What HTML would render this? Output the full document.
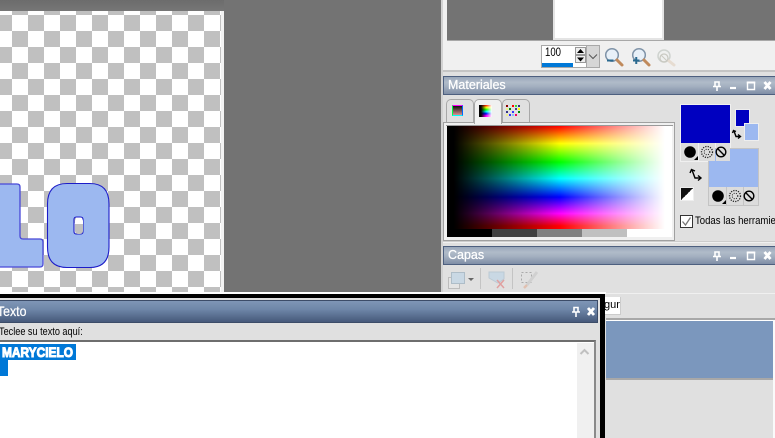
<!DOCTYPE html>
<html><head><meta charset="utf-8"><style>
html,body{margin:0;padding:0;width:775px;height:438px;overflow:hidden;background:#e0e0e0;font-family:"Liberation Sans",sans-serif}
div,svg,span{position:absolute;box-sizing:border-box}
.tb{left:443px;width:332px;height:19px;background:linear-gradient(#98a6b9,#b0bbc9 30%,#a4b0c0 55%,#7f8ea6);border:1px solid #4d5f7f;border-right:0;color:#fff;font-size:12.5px;line-height:17px;padding-left:4px;-webkit-text-stroke:.25px #fff}
</style></head><body>
<!-- canvas area -->
<div style="left:0;top:0;width:441px;height:292px;background:#737373"></div>
<div style="left:0;top:0;width:224px;height:11px;background:linear-gradient(#6c6c6c,#767676)"></div>
<div style="left:0;top:11px;width:221px;height:281px;background-color:#fff;background-image:conic-gradient(#c0c0c0 25%,#fff 0 50%,#c0c0c0 0 75%,#fff 0);background-size:32px 32px;background-position:12px 4px"></div>
<div style="left:221px;top:11px;width:3px;height:281px;background:#f2f2f2"></div>
<svg style="left:0;top:170px" width="224" height="122" viewBox="0 170 224 122">
<path d="M-5 184H17Q20 184 20 187V236Q20 239 23 239H40Q43 239 43 242V264Q43 267 40 267H-5Z" fill="#9cb8f0" stroke="#4848d8" stroke-width="1.3"/>
<path fill-rule="evenodd" d="M67 183.500H90Q109 183.500 109 204V247Q109 267.500 90 267.500H67Q47.500 267.500 47.500 247V204Q47.500 183.500 67 183.500ZM76.500 217Q74 217 74 219.500V231.500Q74 234 76.500 234H80.500Q83 234 83 231.500V219.500Q83 217 80.500 217Z" fill="#9cb8f0" stroke="#1c1cc8" stroke-width="1.1"/>
</svg>
<div style="left:74.500px;top:217.500px;width:8px;height:16px;border-radius:3px;background:linear-gradient(#fff 0 6px,#c0c0c0 6px)"></div>

<!-- right side -->
<div style="left:441px;top:0;width:334px;height:438px;background:#e0e0e0;border-left:2px solid #d2d2d2"></div>
<div style="left:443px;top:0;width:332px;height:72px;background:#f0f0f0;border-bottom:2px solid #c4c4c4"></div>
<div style="left:447px;top:0;width:328px;height:41px;background:#737373;border-bottom:1px solid #a8a8a8"></div>
<div style="left:553px;top:0;width:111px;height:40px;background:#fff;border:2px solid #e4e4e4;border-top:0"></div>
<!-- spinbox -->
<div style="left:541px;top:45px;width:46px;height:23px;background:#fff;border:1px solid #a8a8a8"></div>
<div style="left:545px;top:45px;font-size:12px;line-height:14px;color:#000;transform:scaleX(.8);transform-origin:0 0">100</div>
<div style="left:542px;top:63px;width:31px;height:4px;background:#0078d7"></div>
<div style="left:575px;top:47px;width:11px;height:8px;background:#eee;border:1px solid #999"></div>
<div style="left:575px;top:55px;width:11px;height:8px;background:#eee;border:1px solid #999"></div>
<svg style="left:575px;top:47px" width="12" height="17"><path d="M2 6 5.500 2 9 6Z M2 10.500 5.500 14.500 9 10.500Z" fill="#000"/></svg>
<div style="left:586px;top:45px;width:14px;height:23px;background:#d6d6d6;border:1px solid #a8a8a8"></div>
<svg style="left:586px;top:45px" width="14" height="23"><path d="M3 9.500 7 13.500 11 9.500" fill="none" stroke="#555" stroke-width="1"/></svg>
<!-- zoom icons -->
<svg style="left:604px;top:46px" width="74" height="22">
<g fill="none"><circle cx="8" cy="9" r="6.300" fill="#e8f0f8" stroke="#7f93a8" stroke-width="1.500"/><path d="M13 14 18 19" stroke="#c08a5c" stroke-width="3" stroke-linecap="round"/><path d="M3 14.500H9.500" stroke="#2a6a90" stroke-width="2"/></g>
<g fill="none" transform="translate(27)"><circle cx="8" cy="9" r="6.300" fill="#e8f0f8" stroke="#7f93a8" stroke-width="1.500"/><path d="M13 14 18 19" stroke="#c08a5c" stroke-width="3" stroke-linecap="round"/><path d="M2 14.500H8.500M5.250 11V18" stroke="#2a6a90" stroke-width="2"/></g>
<g fill="none" transform="translate(52)" opacity=".45"><circle cx="8" cy="10" r="6" fill="#eef2ee" stroke="#a8b0a8" stroke-width="1.500"/><path d="M13 15 18 19" stroke="#dcc4ac" stroke-width="3" stroke-linecap="round"/><circle cx="8" cy="12" r="4" stroke="#9a9a8a" stroke-width="1.200"/><path d="M5.500 9.500 10.500 14.500" stroke="#9a9a8a"/></g>
</svg>

<!-- Materiales -->
<div class="tb" style="top:76px">Materiales</div>
<svg style="left:708px;top:78px" width="67" height="16" fill="none" stroke="#fff">
<path d="M7 4H11V8.500H7ZM5 8.500H13M9 9V13" stroke-width="1.600"/>
<path d="M22 10H28" stroke-width="2.200"/>
<path d="M39.500 4.500H46.500V11.500H39.500Z" stroke-width="1.400"/><path d="M38.800 4.500H47.200" stroke-width="2"/>
<path d="M56.500 4 62.500 11M62.500 4 56.500 11" stroke-width="2.800"/>
</svg>
<!-- tabs -->
<div style="left:446px;top:99px;width:28px;height:24px;background:#e0e0e0;border:1px solid #a8a8a8;border-bottom:0;border-radius:5px 5px 0 0"></div>
<div style="left:502px;top:99px;width:28px;height:24px;background:#e0e0e0;border:1px solid #a8a8a8;border-bottom:0;border-radius:5px 5px 0 0"></div>
<div style="left:443px;top:122px;width:232px;height:119px;background:#f0f0f0;border:1px solid #a0a0a0"></div>
<div style="left:474px;top:99px;width:28px;height:25px;background:#f0f0f0;border:1px solid #a8a8a8;border-bottom:0;border-radius:5px 5px 0 0"></div>
<div style="left:452px;top:105px;width:11px;height:11px;background:linear-gradient(#111,#d89090);border:1px solid;border-color:#f0f #06f #0ff #0f4"></div>
<div style="left:479px;top:105px;width:13px;height:12px;background:linear-gradient(90deg,#000 15%,transparent 55%,#fff),linear-gradient(#f00,#ff0 20%,#0f0 40%,#0ff 55%,#00f 72%,#f0f 90%)"></div>
<svg style="left:505px;top:104px" width="16" height="14">
<g><rect x="1" y="1" width="2" height="2" fill="#800"/><rect x="7" y="1" width="2" height="2" fill="#f00"/><rect x="10" y="1" width="2" height="2" fill="#3d3"/><rect x="13" y="1" width="2" height="2" fill="#338"/><rect x="1" y="4" width="2" height="2" fill="#ee8"/><rect x="4" y="4" width="2" height="2" fill="#080"/><rect x="10" y="4" width="2" height="2" fill="#448"/><rect x="13" y="4" width="2" height="2" fill="#ff0"/><rect x="1" y="7" width="2" height="2" fill="#338"/><rect x="7" y="7" width="2" height="2" fill="#33f"/><rect x="13" y="7" width="2" height="2" fill="#080"/><rect x="1" y="10" width="2" height="2" fill="#ee8"/><rect x="4" y="10" width="2" height="2" fill="#33f"/><rect x="7" y="10" width="2" height="2" fill="#8bf"/><rect x="10" y="10" width="2" height="2" fill="#e06"/></g></svg>
<!-- color picker -->
<div style="left:446px;top:125px;width:227px;height:1px;background:#9a9a9a"></div>
<div style="left:447px;top:126px;width:225px;height:103px;background:linear-gradient(90deg,#000 0,#000 7px,transparent 113px,#fff 218px,#fff 225px),linear-gradient(#f00 0,#ff0 17%,#0f0 35%,#0ff 51%,#00f 69%,#f0f 85%,#f00 97%)"></div>
<div style="left:447px;top:229px;width:45px;height:8px;background:#000"></div>
<div style="left:492px;top:229px;width:45px;height:8px;background:#404040"></div>
<div style="left:537px;top:229px;width:45px;height:8px;background:#808080"></div>
<div style="left:582px;top:229px;width:45px;height:8px;background:#c0c0c0"></div>
<div style="left:627px;top:229px;width:45px;height:8px;background:#fff"></div>
<!-- swatches -->
<div style="left:735px;top:109px;width:15px;height:18px;background:#0000c0;border:1px solid #eee"></div>
<div style="left:744px;top:123px;width:15px;height:18px;background:#9cb8f0;border:1px solid #eee"></div>
<div style="left:680px;top:104px;width:51px;height:58px;background:#f0f0f0"></div>
<div style="left:681px;top:105px;width:49px;height:38px;background:#0000c0"></div>
<div style="left:708px;top:148px;width:51px;height:58px;background:#c4c4c4"></div>
<div style="left:709px;top:149px;width:49px;height:38px;background:#9cb8f0"></div>
<svg style="left:680px;top:143px" width="80" height="64" fill="none">
<g><rect x="1" y="0" width="17" height="18" fill="#dcdcdc"/><rect x="19" y="0" width="16" height="18" fill="#dcdcdc"/><rect x="36" y="0" width="14" height="18" fill="#dcdcdc"/>
<circle cx="10" cy="9" r="5.800" fill="#000"/><path d="M14 17H18V13Z" fill="#000"/>
<circle cx="27" cy="9" r="5.500" stroke="#222" stroke-width="1.300" stroke-dasharray="1.200 1.200"/><circle cx="27" cy="9" r="2.800" stroke="#222" stroke-dasharray="1 1.300"/>
<circle cx="41" cy="9" r="4.800" stroke="#000" stroke-width="1.400"/><path d="M37.800 5.800 44.200 12.200" stroke="#000" stroke-width="1.400"/></g>
<g transform="translate(28 44)"><rect x="1" y="0" width="17" height="18" fill="#dcdcdc"/><rect x="19" y="0" width="16" height="18" fill="#dcdcdc"/><rect x="36" y="0" width="14" height="18" fill="#dcdcdc"/>
<circle cx="10" cy="9" r="5.800" fill="#000"/><path d="M14 17H18V13Z" fill="#000"/>
<circle cx="27" cy="9" r="5.500" stroke="#222" stroke-width="1.300" stroke-dasharray="1.200 1.200"/><circle cx="27" cy="9" r="2.800" stroke="#222" stroke-dasharray="1 1.300"/>
<circle cx="41" cy="9" r="4.800" stroke="#000" stroke-width="1.400"/><path d="M37.800 5.800 44.200 12.200" stroke="#000" stroke-width="1.400"/></g>
</svg>
<svg style="left:680px;top:126px" width="64" height="60" fill="none" stroke="#000" stroke-width="1.400">
<path d="M54 5 56 10.500H60"/><path d="M52.500 7 53.500 4.500 56 5.500M58 8.500 60.500 10.500 58 12.500"/>
<path d="M12 44 15 52H20"/><path d="M10 47 11.500 43.500 15 45M18 49.500 21 52 18 54.500"/>
</svg>
<div style="left:680px;top:187px;width:14px;height:14px;border:1px solid #eee;background:linear-gradient(135deg,#111 50%,#fff 50%)"></div>
<div style="left:680px;top:215px;width:13px;height:13px;background:#fff;border:1px solid #333"></div>
<svg style="left:680px;top:215px" width="13" height="13" fill="none"><path d="M2.500 6.500 5.500 10 10.500 2.500" stroke="#777" stroke-width="1.300"/></svg>
<div style="left:695px;top:214px;font-size:11px;line-height:14px;color:#000;white-space:nowrap;transform:scaleX(.87);transform-origin:0 0">Todas las herramientas</div>

<!-- Capas -->
<div style="left:443px;top:241px;width:332px;height:1px;background:#ccc"></div>
<div style="left:443px;top:242px;width:332px;height:1px;background:#f0f0f0"></div>
<div class="tb" style="top:246px">Capas</div>
<svg style="left:708px;top:248px" width="67" height="16" fill="none" stroke="#fff">
<path d="M7 4H11V8.500H7ZM5 8.500H13M9 9V13" stroke-width="1.600"/>
<path d="M22 10H28" stroke-width="2.200"/>
<path d="M39.500 4.500H46.500V11.500H39.500Z" stroke-width="1.400"/><path d="M38.800 4.500H47.200" stroke-width="2"/>
<path d="M56.500 4 62.500 11M62.500 4 56.500 11" stroke-width="2.800"/>
</svg>
<svg style="left:443px;top:265px" width="110" height="28" fill="none">
<rect x="5.500" y="12.500" width="11" height="11" fill="#e4e4e4" stroke="#bcbcbc"/><rect x="8.500" y="7.500" width="13" height="11" fill="#c9d8e4" stroke="#aebdc8"/>
<path d="M25 13H31L28 16Z" fill="#666"/>
<path d="M37.500 3V24" stroke="#c4c4c4"/>
<path d="M46 7H61V14L55 18 46 13Z" fill="#c9d8e4" stroke="#bccad4"/>
<path d="M54 15 61 23M61 15 54 23" stroke="#e0a0a0" stroke-width="1.500"/>
<path d="M69.500 3V24" stroke="#c4c4c4"/>
<rect x="78.500" y="7.500" width="10" height="10" stroke="#aaa" stroke-dasharray="2 2"/>
<path d="M94 7 84 20" stroke="#d0d0d0" stroke-width="3"/><path d="M84 20 81 23" stroke="#e0c0b0" stroke-width="2.500"/>
</svg>
<div style="left:605px;top:293px;width:170px;height:1px;background:#f0f0f0"></div>
<!-- layer tab + list -->
<div style="left:605px;top:297px;width:16px;height:18px;background:#fff;border-right:1px solid #ccc;border-bottom:1px solid #ccc;overflow:hidden"></div>
<div style="left:605px;top:299px;width:15px;height:13px;overflow:hidden;font-size:11px;line-height:13px;color:#000"><span style="left:-1px;top:0;white-space:nowrap">gund</span></div>
<div style="left:606px;top:318px;width:169px;height:2px;background:#a8a8a8"></div>
<div style="left:606px;top:320px;width:167px;height:1px;background:#fff"></div>
<div style="left:606px;top:321px;width:167px;height:57px;background:#7b97bd"></div>
<div style="left:606px;top:378px;width:167px;height:2px;background:#a8a8a8"></div>
<div style="left:773px;top:320px;width:2px;height:118px;background:#fafafa"></div>

<!-- Texto window -->
<div style="left:0;top:292px;width:606px;height:2px;background:#fff"></div>
<div style="left:0;top:294px;width:605px;height:144px;background:#000"></div>
<div style="left:0;top:298px;width:600px;height:140px;background:#e0e0e0"></div>
<div style="left:0;top:300px;width:598px;height:23px;background:linear-gradient(#7f96b6,#6e86a8 40%,#46597a);border:1px solid #3c4c68;border-left:0"></div>
<div style="left:-3px;top:301px;color:#fff;font-size:14px;line-height:21px;transform:scaleX(.88);transform-origin:0 0;-webkit-text-stroke:.25px #fff">Texto</div>
<svg style="left:570px;top:304px" width="28" height="16" fill="none" stroke="#fff">
<path d="M4 3.500H8V8H4ZM2 8H10M6 8.500V13" stroke-width="1.600"/>
<path d="M18 4 24 11M24 4 18 11" stroke-width="2.800"/>
</svg>
<div style="left:-1px;top:326px;font-size:11px;line-height:13px;color:#000;white-space:nowrap;transform:scaleX(.83);transform-origin:0 0">Teclee su texto aquí:</div>
<div style="left:0;top:340px;width:596px;height:98px;background:#fff;border-top:2px solid #6e6e6e;border-right:2px solid #8a8a8a"></div>
<div style="left:0;top:342px;width:594px;height:1px;background:#fff"></div>
<div style="left:577px;top:343px;width:17px;height:95px;background:#f0f0f0"></div>
<svg style="left:579px;top:347px" width="11" height="10" fill="none"><path d="M1.500 7 5.500 3 9.500 7" stroke="#c0c0c0" stroke-width="2"/></svg>
<div style="left:0;top:344px;width:76px;height:16px;background:#0078d7"></div>
<div style="left:0;top:360px;width:8px;height:16px;background:#0078d7"></div>
<svg style="left:0;top:344px" width="76" height="16"><text x="2" y="13" font-family="Liberation Sans" font-size="14" font-weight="700" fill="#fff" stroke="#fff" stroke-width="1" textLength="71" lengthAdjust="spacingAndGlyphs">MARYCIELO</text></svg>
</body></html>
